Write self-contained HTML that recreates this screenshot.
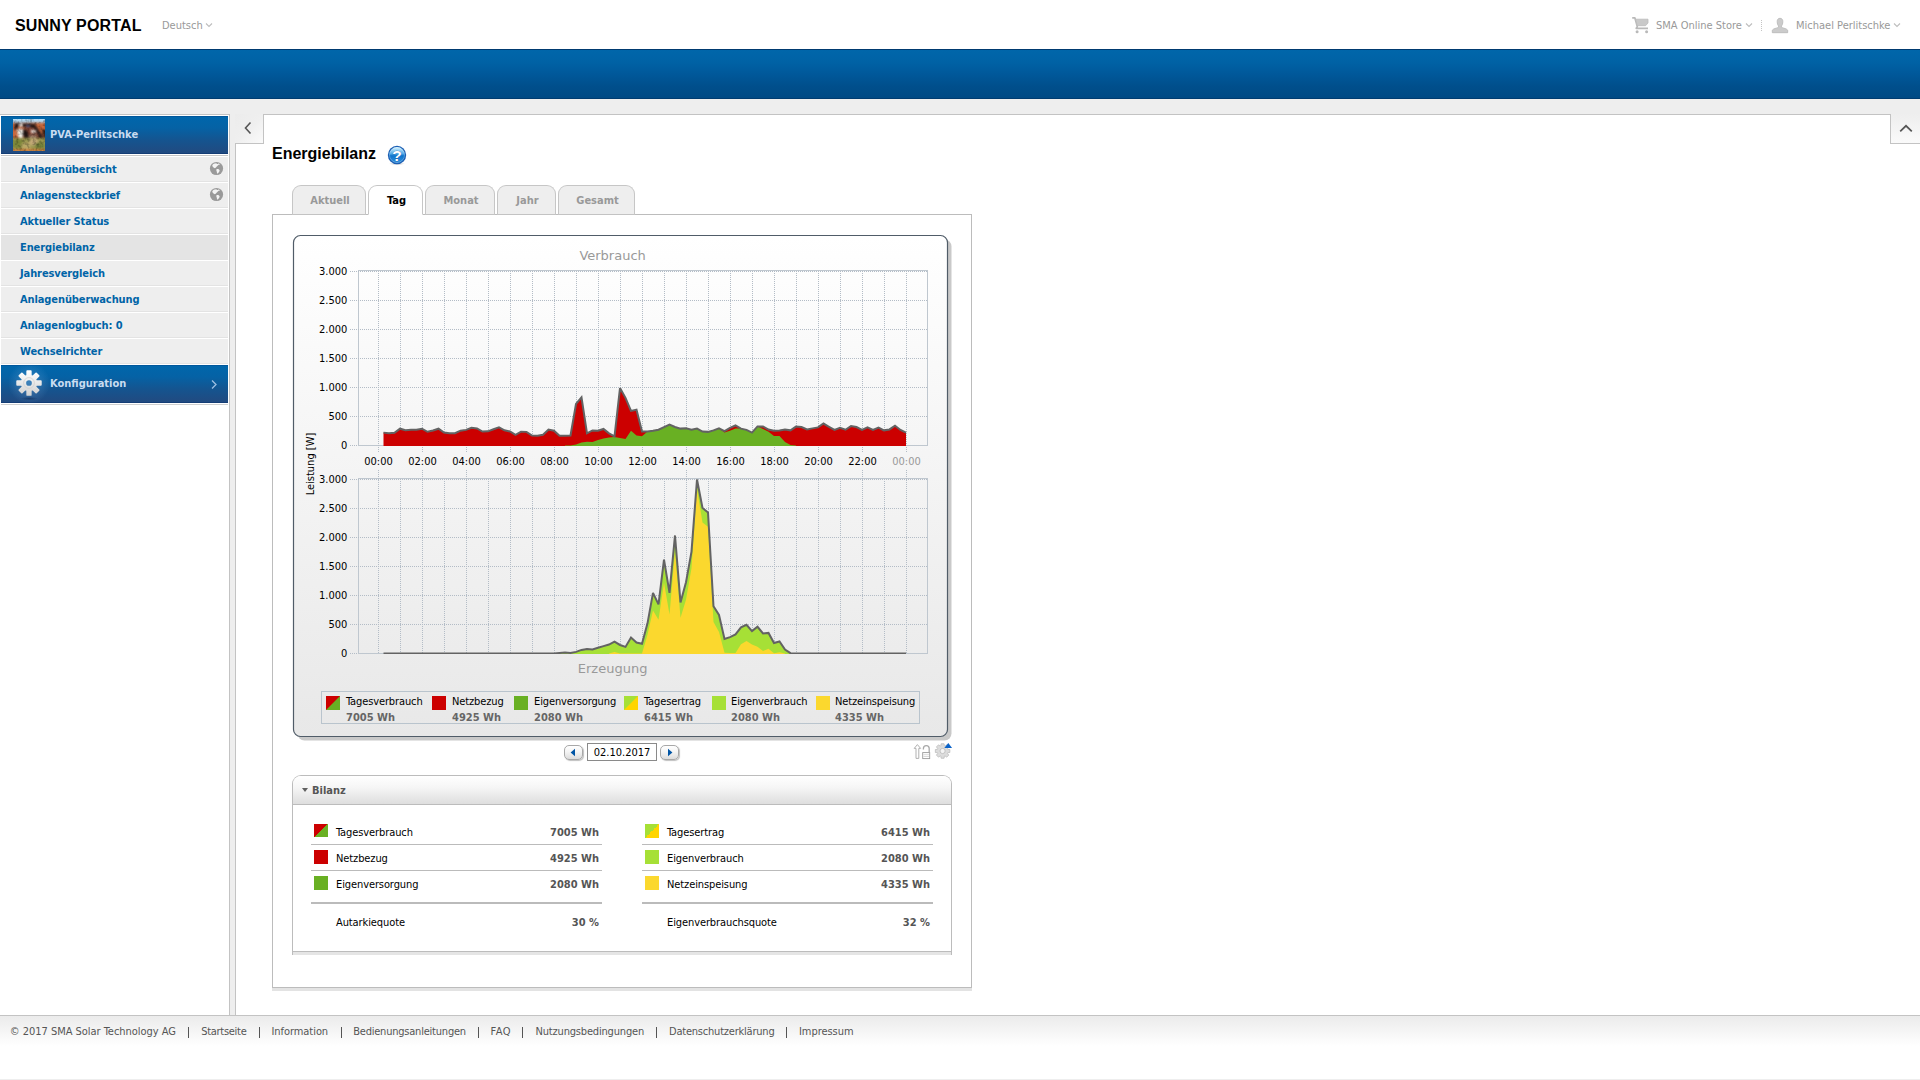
<!DOCTYPE html>
<html lang="de">
<head>
<meta charset="utf-8">
<title>Sunny Portal - Energiebilanz</title>
<style>
html,body{margin:0;padding:0}
body{width:1920px;height:1080px;overflow:hidden;position:relative;background:#eeeeee;
 font-family:"DejaVu Sans Condensed","DejaVu Sans","Liberation Sans",sans-serif;font-stretch:condensed;font-size:11px;color:#000}
.abs{position:absolute}
.fut{font-family:"Liberation Sans",sans-serif;font-stretch:normal;font-weight:bold}
#hdr{left:0;top:0;width:1920px;height:49px;background:#fff}
#logo{left:15px;top:17px;font-size:16px;line-height:18px;letter-spacing:.15px;color:#000;white-space:nowrap}
#lang{left:162px;top:19px;font-size:11px;line-height:14px;color:#999;white-space:nowrap}
.hl{font-size:11px;line-height:14px;color:#999;white-space:nowrap;top:19px}
#bar{left:0;top:49px;width:1920px;height:50px;box-sizing:border-box;border-top:1px solid #003a70;border-bottom:1px solid #003c70;
 background:linear-gradient(#0066aa 0%,#0062a5 25%,#00589a 50%,#004f8c 75%,#004a84 100%)}
/* sidebar */
#side{left:0;top:114px;width:229px;height:901px;background:#fff;border-top:1px solid #c3c3c3;border-right:1px solid #c3c3c3;box-sizing:content-box}
#plant{left:1px;top:1px;width:227px;height:38px;box-sizing:border-box;border-top:1px solid #00579c;border-bottom:1px solid #143d75;background:linear-gradient(#0066ab 0%,#0562a5 30%,#15548f 65%,#214a80 100%)}
#plant .nm{left:49px;top:11px;font-weight:bold;font-size:11px;line-height:14px;color:#c9dcf0;white-space:nowrap}
.mi{left:1px;width:227px;height:24px;background:#eeeeee;border-bottom:1px solid #e3e3e3}
.mi span{position:absolute;left:19px;top:6px;font-weight:bold;font-size:11px;line-height:14px;color:#0064a7;white-space:nowrap;letter-spacing:-0.1px}
.mi.sel{background:#e4e4e4}
.gl{left:208px;top:4px}
#conf{left:1px;top:250px;width:227px;height:38px;box-sizing:border-box;border-top:1px solid #00579c;border-bottom:1px solid #143d75;background:linear-gradient(#0066ab 0%,#0562a5 30%,#15548f 65%,#214a80 100%)}
#conf .nm{left:49px;top:11px;font-weight:bold;font-size:11px;line-height:14px;color:#c9dcf0;white-space:nowrap}
/* content */

#main{left:235px;top:114px;width:1684px;height:900px;background:#fff;border-left:1px solid #c3c3c3;border-top:1px solid #c3c3c3}
#colL{left:235px;top:114px;width:29px;height:30px;box-sizing:border-box;background:linear-gradient(135deg,#ececec 0%,#efefef 50%,#fafafa 100%);border-right:1px solid #c3c3c3;border-bottom:1px solid #c3c3c3}
#colR{left:1890px;top:114px;width:30px;height:30px;box-sizing:border-box;background:linear-gradient(#eeeeee,#fafafa);border-left:1px solid #c3c3c3;border-bottom:1px solid #c3c3c3}
#title{left:272px;top:144px;font-size:16px;line-height:20px;white-space:nowrap;color:#000}
#panel{left:272px;top:214px;width:700px;height:774px;box-sizing:border-box;border:1px solid #bcbcbc;background:#fff;box-shadow:0 3px 0 #e3e3e3}
.tab{top:185px;height:30px;box-sizing:border-box;border:1px solid #c6c6c6;border-bottom:1px solid #c3c3c3;border-radius:9px 9px 0 0;background:#eeeeee;color:#999;font-weight:bold;font-size:11px;line-height:14px;text-align:center;padding-top:8px;padding-left:2px}
.tab.act{background:#fff;color:#000;border-bottom:1px solid #fff}
.nbtn{width:19px;height:15px;box-sizing:border-box;border:1px solid #a8a8a8;border-radius:5px;background:linear-gradient(#ffffff,#f4f4f4 45%,#dcdcdc);box-shadow:1px 1px 1px rgba(0,0,0,.25)}
.nbtn svg{display:block}
#date{left:587px;top:743px;width:70px;height:18px;box-sizing:border-box;border:1px solid #8a8a8a;background:#fff;font-size:11px;line-height:18px;text-align:center;color:#000}
#bil{left:292px;top:775px;width:660px;height:180px;box-sizing:border-box;border:1px solid #bcbcbc;border-bottom:none;border-radius:9px 9px 0 0;background:#fff}
#bilh{left:0;top:0;width:658px;height:28px;border-bottom:1px solid #bcbcbc;border-radius:8px 8px 0 0;background:linear-gradient(#ffffff 0%,#f6f6f6 40%,#dedede 100%)}
#bilf{left:293px;top:951px;width:658px;height:4px;background:#e5e5e5;border-top:1px solid #bcbcbc;box-sizing:border-box}
.sw{width:14px;height:14px}
.bl{white-space:nowrap;line-height:14px;color:#000;letter-spacing:-0.1px}
.bv{width:288px;text-align:right;white-space:nowrap;line-height:14px;font-weight:bold;color:#555}
#foot{left:0;top:1015px;width:1920px;height:64px;box-sizing:border-box;border-top:1px solid #c3c3c3;background:linear-gradient(#ebebeb 0px,#ffffff 30px,#ffffff 100%)}
#ftxt{left:0;top:1025px;width:900px;height:16px;color:#555}
#ftxt span{position:absolute;top:0;white-space:nowrap;line-height:14px}
#ftxt i{position:absolute;top:2px;width:1px;height:11px;background:#555}
</style>
</head>
<body>
<div id="hdr" class="abs">
 <div id="logo" class="abs fut">SUNNY PORTAL</div>
 <div id="lang" class="abs">Deutsch</div>
 <div class="abs hl" style="left:1656px">SMA Online Store</div>
 <div class="abs hl" style="left:1796px">Michael Perlitschke</div>

 <svg class="abs" style="left:204px;top:21px" width="10" height="8" viewBox="0 0 10 8"><path d="M2 2.5 L5 5.5 L8 2.5" fill="none" stroke="#bdbdbd" stroke-width="1.1"/></svg>
 <svg class="abs" style="left:1631px;top:16px" width="19" height="18" viewBox="0 0 19 18">
  <path d="M1.2 1.9 H3.9 L6.3 10.6 L5.2 12.3 H17" fill="none" stroke="#b9b9b9" stroke-width="1.7" stroke-linejoin="round"/>
  <path d="M4.6 3.2 H17 V7 L14.6 9.7 H6.3 Z" fill="#c9c9c9" stroke="#bdbdbd" stroke-width="0.8" stroke-linejoin="round"/>
  <circle cx="6.1" cy="15.8" r="1.5" fill="#b9b9b9"/><circle cx="15.6" cy="15.8" r="1.5" fill="#b9b9b9"/>
 </svg>
 <svg class="abs" style="left:1744px;top:21px" width="10" height="8" viewBox="0 0 10 8"><path d="M2 2.5 L5 5.5 L8 2.5" fill="none" stroke="#bdbdbd" stroke-width="1.1"/></svg>
 <div class="abs" style="left:1761px;top:20px;width:1px;height:11px;background:repeating-linear-gradient(#c4c4c4 0,#c4c4c4 1px,transparent 1px,transparent 2px)"></div>
 <svg class="abs" style="left:1771px;top:17px" width="18" height="17" viewBox="0 0 18 17">
  <path d="M9 1.3 C11 1.3 11.8 2.7 11.8 4.5 C11.8 6.6 11.3 8 10.4 9 L10.4 10.2 C11.6 11.2 16.7 11.6 16.7 13.6 L16.7 15.7 L1.3 15.7 L1.3 13.6 C1.3 11.6 6.4 11.2 7.6 10.2 L7.6 9 C6.7 8 6.2 6.6 6.2 4.5 C6.2 2.7 7 1.3 9 1.3 Z" fill="#cbcbcb" stroke="#b6b6b6" stroke-width=".8"/>
 </svg>
 <svg class="abs" style="left:1892px;top:21px" width="10" height="8" viewBox="0 0 10 8"><path d="M2 2.5 L5 5.5 L8 2.5" fill="none" stroke="#bdbdbd" stroke-width="1.1"/></svg>
</div>
<div id="bar" class="abs"></div>

<div id="side" class="abs">
 <div id="plant" class="abs"><svg class="abs" style="left:12px;top:2px" width="32" height="32" viewBox="0 0 32 32">
 <defs><filter id="ph" x="0" y="0" width="100%" height="100%" color-interpolation-filters="sRGB">
  <feGaussianBlur in="SourceGraphic" stdDeviation="0.9" result="b"/>
  <feTurbulence type="fractalNoise" baseFrequency="0.3" numOctaves="2" seed="7" result="n"/>
  <feColorMatrix in="n" type="matrix" values="0.9 0 0 0 0.5  0.9 0 0 0 0.5  0.9 0 0 0 0.5  0 0 0 0 1" result="g"/>
  <feBlend in="b" in2="g" mode="multiply"/>
 </filter><clipPath id="tc"><rect width="32" height="32"/></clipPath></defs>
 <g clip-path="url(#tc)"><g filter="url(#ph)">
 <rect x="-3" y="-3" width="38" height="38" fill="#b8623e"/>
 <rect x="-3" y="-3" width="38" height="6.6" fill="#b4dcf6"/>
 <polygon points="19,4 35,4 35,22 30,20 24,9" fill="#c6683c"/>
 <polygon points="-3,5 3,5 4,11 5,21 -3,21" fill="#c8683e"/>
 <polygon points="2,4 22,5 31,19 27,20 21,9 12,8 5,7 3,11 1,11" fill="#2c1c1a"/>
 <polygon points="12,7 21,9 25,16 24,20 16,20 13,13" fill="#7e4030"/>
 <polygon points="10,10 14,11 16,19 12,21 10,16" fill="#231616"/>
 <polygon points="4,10 10,10 10,18 7,20 5,17" fill="#f2efe8"/>
 <polygon points="6,4.5 10,5 10,7.5 6,7.5" fill="#f0ece8"/>
 <polygon points="13,6 17,6 17,8 13,8" fill="#3a4a78"/>
 <polygon points="18,10.5 23,11.5 23,14 18,14" fill="#ece4dc"/>
 <polygon points="16,16 24,16 24,19 16,19" fill="#9a7a66"/>
 <polygon points="29,10 35,12 35,20 31,18" fill="#2a1a18"/>
 <rect x="-3" y="19" width="38" height="12" fill="#98964e"/>
 <ellipse cx="5" cy="25" rx="6" ry="5" fill="#7c8638"/>
 <ellipse cx="13" cy="27" rx="5" ry="4" fill="#b8a866"/>
 <ellipse cx="21" cy="23" rx="5" ry="3.6" fill="#c4aa78"/>
 <ellipse cx="27" cy="27" rx="5" ry="4" fill="#76823a"/>
 <rect x="-3" y="30" width="38" height="5" fill="#d08440"/>
 </g></g></svg><div class="abs nm">PVA-Perlitschke</div></div>
 <div class="abs mi" style="top:42px"><span>Anlagenübersicht</span><svg class="abs gl" width="15" height="15" viewBox="0 0 15 15"><circle cx="7.5" cy="7.5" r="6.6" fill="#9a9a9a"/><path d="M3.3 4.3 C3.8 2.9 5.6 2.1 7.6 2.2 C7.2 2.9 8.2 3.3 9 2.9 L9.9 3.5 C9.4 4.4 8.2 4.8 7.5 5.8 C6.9 6.8 6.1 7.4 5.4 7.1 C4.3 6.5 3.2 5.5 3.3 4.3 Z M9.3 2.3 L10.7 3 L10.4 3.9 L9.2 3.1 Z M7.4 8.4 C8.4 7.8 10 8.2 10.6 9.2 C10.8 10.4 9.6 11.4 8.8 12.4 C8.2 12.8 7.8 12 7.9 11 C7.8 10 7 9.2 7.4 8.4 Z" fill="#f4f4f4"/></svg></div>
 <div class="abs mi" style="top:68px"><span>Anlagensteckbrief</span><svg class="abs gl" width="15" height="15" viewBox="0 0 15 15"><circle cx="7.5" cy="7.5" r="6.6" fill="#9a9a9a"/><path d="M3.3 4.3 C3.8 2.9 5.6 2.1 7.6 2.2 C7.2 2.9 8.2 3.3 9 2.9 L9.9 3.5 C9.4 4.4 8.2 4.8 7.5 5.8 C6.9 6.8 6.1 7.4 5.4 7.1 C4.3 6.5 3.2 5.5 3.3 4.3 Z M9.3 2.3 L10.7 3 L10.4 3.9 L9.2 3.1 Z M7.4 8.4 C8.4 7.8 10 8.2 10.6 9.2 C10.8 10.4 9.6 11.4 8.8 12.4 C8.2 12.8 7.8 12 7.9 11 C7.8 10 7 9.2 7.4 8.4 Z" fill="#f4f4f4"/></svg></div>
 <div class="abs mi" style="top:94px"><span>Aktueller Status</span></div>
 <div class="abs mi sel" style="top:120px"><span>Energiebilanz</span></div>
 <div class="abs mi" style="top:146px"><span>Jahresvergleich</span></div>
 <div class="abs mi" style="top:172px"><span>Anlagenüberwachung</span></div>
 <div class="abs mi" style="top:198px"><span>Anlagenlogbuch: 0</span></div>
 <div class="abs mi" style="top:224px"><span>Wechselrichter</span></div>
 <div class="abs" style="left:1px;top:40px;width:227px;height:1px;background:#c6c6c6"></div>
 <div class="abs" style="left:1px;top:289px;width:227px;height:1px;background:#cfcfcf"></div>
 <div id="conf" class="abs"><svg class="abs" style="left:6px;top:-5px" width="44" height="48" viewBox="-8 -8 44 48">
 <defs><linearGradient id="gg" x1="0" y1="0" x2="0" y2="1"><stop offset="0" stop-color="#ffffff"/><stop offset="1" stop-color="#d2d2d2"/></linearGradient>
 <radialGradient id="gs"><stop offset="0" stop-color="#0b2a55" stop-opacity=".6"/><stop offset="1" stop-color="#0b2a55" stop-opacity="0"/></radialGradient>
 <radialGradient id="gl"><stop offset="0" stop-color="#8fc0ee" stop-opacity=".38"/><stop offset="1" stop-color="#8fc0ee" stop-opacity="0"/></radialGradient></defs>
 <circle cx="14" cy="14" r="21" fill="url(#gl)"/>
 <ellipse cx="14" cy="29.6" rx="9" ry="1.8" fill="url(#gs)"/>
 <path d="M12.17 6.83 L12.21 2.13 L15.79 2.13 L15.83 6.83 L17.78 7.64 L21.12 4.34 L23.66 6.88 L20.36 10.22 L21.17 12.17 L25.87 12.21 L25.87 15.79 L21.17 15.83 L20.36 17.78 L23.66 21.12 L21.12 23.66 L17.78 20.36 L15.83 21.17 L15.79 25.87 L12.21 25.87 L12.17 21.17 L10.22 20.36 L6.88 23.66 L4.34 21.12 L7.64 17.78 L6.83 15.83 L2.13 15.79 L2.13 12.21 L6.83 12.17 L7.64 10.22 L4.34 6.88 L6.88 4.34 L10.22 7.64 Z M14 10.3 A3.7 3.7 0 1 0 14 17.7 A3.7 3.7 0 1 0 14 10.3 Z" fill="url(#gg)" fill-rule="evenodd" stroke="url(#gg)" stroke-width="1.7" stroke-linejoin="round"/>
 <circle cx="14" cy="14" r="5.4" fill="none" stroke="#cfcfcf" stroke-width="1" opacity=".75"/>
</svg><svg class="abs" style="left:209px;top:13px" width="8" height="11" viewBox="0 0 8 11"><path d="M2 1.5 L6 5.5 L2 9.5" fill="none" stroke="#9ebfe2" stroke-width="1.3"/></svg><div class="abs nm">Konfiguration</div></div>
</div>

<div id="main" class="abs"></div>
<!-- collapse handles -->
<div class="abs" id="colL"></div>
<div class="abs" id="colR"></div>
<svg class="abs" style="left:240px;top:120px" width="16" height="16" viewBox="0 0 16 16"><path d="M10.5 2.5 L5.5 8 L10.5 13.5" fill="none" stroke="#555" stroke-width="1.6"/></svg>
<svg class="abs" style="left:1898px;top:120px" width="16" height="16" viewBox="0 0 16 16"><path d="M2.2 11.4 L8 5.8 L13.8 11.4" fill="none" stroke="#555" stroke-width="1.7"/></svg>

<div id="title" class="abs fut">Energiebilanz</div>
<svg class="abs" id="help" style="left:386px;top:144px" width="22" height="22" viewBox="0 0 22 22">
 <defs><linearGradient id="hg" x1="0" y1="0" x2="0" y2="1"><stop offset="0" stop-color="#d6f5ff"/><stop offset="0.42" stop-color="#4ea8e8"/><stop offset="0.55" stop-color="#0d74cc"/><stop offset="1" stop-color="#2f8edc"/></linearGradient>
 <radialGradient id="hs"><stop offset="0" stop-color="#000" stop-opacity=".25"/><stop offset="1" stop-color="#000" stop-opacity="0"/></radialGradient></defs>
 <ellipse cx="11" cy="19.6" rx="8" ry="1.8" fill="url(#hs)"/>
 <circle cx="11" cy="11" r="9.2" fill="#1c5fb4"/>
 <circle cx="11" cy="11" r="7.9" fill="url(#hg)"/>
 <circle cx="11" cy="11" r="7.5" fill="none" stroke="#fff" stroke-opacity=".3" stroke-width=".8"/>
 <text x="11" y="16.6" text-anchor="middle" font-family="Liberation Sans,sans-serif" font-weight="bold" font-size="15.5" fill="#fff" stroke="#2a5a98" stroke-width=".35" paint-order="stroke">?</text>
</svg>

<div id="panel" class="abs"></div>
<div class="abs tab" style="left:292px;width:74px">Aktuell</div>
<div class="abs tab act" style="left:368px;width:55px">Tag</div>
<div class="abs tab" style="left:425px;width:70px">Monat</div>
<div class="abs tab" style="left:497px;width:59px">Jahr</div>
<div class="abs tab" style="left:558px;width:77px">Gesamt</div>

<svg class="abs" id="chart" style="left:285px;top:228px" width="680" height="520" viewBox="285 228 680 520">
<defs>
 <linearGradient id="cbg" x1="0" y1="0" x2="0" y2="1"><stop offset="0" stop-color="#ffffff"/><stop offset="1" stop-color="#e8e8e8"/></linearGradient>
 <clipPath id="cu"><rect x="358" y="262" width="570" height="184"/></clipPath><clipPath id="cl"><rect x="358" y="470" width="570" height="184"/></clipPath>
</defs>
<style>
 .g{stroke:#b3bcc6;stroke-width:1;stroke-dasharray:1 1;shape-rendering:crispEdges}
 .ax{font-family:"DejaVu Sans Condensed","DejaVu Sans","Liberation Sans",sans-serif;font-stretch:condensed;font-size:11px;fill:#000}
 .gr{fill:#999}
 .tt{font-family:"DejaVu Sans","Liberation Sans",sans-serif;font-stretch:normal;font-size:13px;fill:#999}
 .lg{font-family:"DejaVu Sans Condensed","DejaVu Sans","Liberation Sans",sans-serif;font-stretch:condensed;font-size:11px;fill:#000;letter-spacing:-0.12px}
 .lv{font-family:"DejaVu Sans Condensed","DejaVu Sans","Liberation Sans",sans-serif;font-stretch:condensed;font-size:11px;font-weight:bold;fill:#666}
</style>
<rect x="297.5" y="239.5" width="654" height="501" rx="7" fill="#c9c9c9"/>
<rect x="293.5" y="235.5" width="654" height="501" rx="7" fill="url(#cbg)" stroke="#505c68" stroke-width="1.2"/>
<text x="612.6" y="259.5" text-anchor="middle" class="tt">Verbrauch</text>
<text x="612.6" y="673" text-anchor="middle" class="tt">Erzeugung</text>
<text transform="translate(313.6,464) rotate(-90)" text-anchor="middle" class="ax">Leistung [W]</text>
<rect x="358.5" y="270.5" width="569" height="175.0" fill="none" stroke="#bfc7cf" stroke-width="1"/>
<line x1="350" x2="927" y1="271.5" y2="271.5" class="g"/>
<line x1="350" x2="927" y1="300.5" y2="300.5" class="g"/>
<line x1="350" x2="927" y1="329.5" y2="329.5" class="g"/>
<line x1="350" x2="927" y1="358.5" y2="358.5" class="g"/>
<line x1="350" x2="927" y1="387.5" y2="387.5" class="g"/>
<line x1="350" x2="927" y1="416.5" y2="416.5" class="g"/>
<line x1="350" x2="358" y1="445.5" y2="445.5" class="g"/>
<line x1="378.5" x2="378.5" y1="271.0" y2="453.0" class="g"/>
<line x1="400.5" x2="400.5" y1="271.0" y2="445.0" class="g"/>
<line x1="422.5" x2="422.5" y1="271.0" y2="453.0" class="g"/>
<line x1="444.5" x2="444.5" y1="271.0" y2="445.0" class="g"/>
<line x1="466.5" x2="466.5" y1="271.0" y2="453.0" class="g"/>
<line x1="488.5" x2="488.5" y1="271.0" y2="445.0" class="g"/>
<line x1="510.5" x2="510.5" y1="271.0" y2="453.0" class="g"/>
<line x1="532.5" x2="532.5" y1="271.0" y2="445.0" class="g"/>
<line x1="554.5" x2="554.5" y1="271.0" y2="453.0" class="g"/>
<line x1="576.5" x2="576.5" y1="271.0" y2="445.0" class="g"/>
<line x1="598.5" x2="598.5" y1="271.0" y2="453.0" class="g"/>
<line x1="620.5" x2="620.5" y1="271.0" y2="445.0" class="g"/>
<line x1="642.5" x2="642.5" y1="271.0" y2="453.0" class="g"/>
<line x1="664.5" x2="664.5" y1="271.0" y2="445.0" class="g"/>
<line x1="686.5" x2="686.5" y1="271.0" y2="453.0" class="g"/>
<line x1="708.5" x2="708.5" y1="271.0" y2="445.0" class="g"/>
<line x1="730.5" x2="730.5" y1="271.0" y2="453.0" class="g"/>
<line x1="752.5" x2="752.5" y1="271.0" y2="445.0" class="g"/>
<line x1="774.5" x2="774.5" y1="271.0" y2="453.0" class="g"/>
<line x1="796.5" x2="796.5" y1="271.0" y2="445.0" class="g"/>
<line x1="818.5" x2="818.5" y1="271.0" y2="453.0" class="g"/>
<line x1="840.5" x2="840.5" y1="271.0" y2="445.0" class="g"/>
<line x1="862.5" x2="862.5" y1="271.0" y2="453.0" class="g"/>
<line x1="884.5" x2="884.5" y1="271.0" y2="445.0" class="g"/>
<line x1="906.5" x2="906.5" y1="271.0" y2="453.0" class="g"/>
<g clip-path="url(#cu)">
<polygon points="383.50,446.00 383.50,432.62 389.00,433.32 394.50,432.74 400.00,428.68 405.50,430.30 411.00,429.72 416.50,429.72 422.00,428.68 427.50,431.75 433.00,430.48 438.50,428.68 444.00,432.45 449.50,433.20 455.00,433.20 460.50,430.65 466.00,429.90 471.50,427.75 477.00,428.45 482.50,431.58 488.00,431.35 493.50,429.20 499.00,427.40 504.50,430.30 510.00,431.46 515.50,434.77 521.00,431.64 526.50,431.87 532.00,435.52 537.50,435.70 543.00,434.77 548.50,429.49 554.00,430.77 559.50,435.70 565.00,435.70 570.50,435.52 576.00,403.97 581.50,397.42 587.00,433.32 592.50,430.42 598.00,430.65 603.50,428.97 609.00,433.32 614.50,436.45 620.00,388.02 625.50,397.82 631.00,410.87 636.50,409.77 642.00,431.41 647.50,431.52 653.00,430.77 658.50,429.72 664.00,427.17 669.50,424.62 675.00,426.94 680.50,428.62 686.00,428.27 691.50,429.72 697.00,428.62 702.50,431.52 708.00,431.87 713.50,430.42 719.00,428.27 724.50,431.17 730.00,427.87 735.50,425.49 741.00,428.62 746.50,429.84 752.00,432.62 757.50,426.42 763.00,426.42 768.50,429.55 774.00,430.71 779.50,430.48 785.00,429.55 790.50,430.36 796.00,426.59 801.50,427.06 807.00,429.43 812.50,428.39 818.00,427.40 823.50,423.52 829.00,426.82 834.50,429.96 840.00,427.87 845.50,429.72 851.00,426.07 856.50,427.06 862.00,429.96 867.50,427.40 873.00,429.96 878.50,427.64 884.00,430.36 889.50,429.43 895.00,425.66 900.50,429.96 906.00,432.68 906.00,446.00" fill="#cc0000"/>
<polygon points="565.00,446.00 565.00,445.50 570.50,445.38 576.00,444.57 581.50,442.54 587.00,441.79 592.50,442.02 598.00,440.05 603.50,438.60 609.00,437.44 614.50,436.97 620.00,438.02 625.50,439.12 631.00,430.77 636.50,435.52 642.00,436.22 647.50,431.52 653.00,430.77 658.50,429.72 664.00,427.17 669.50,424.62 675.00,426.94 680.50,428.62 686.00,428.27 691.50,429.72 697.00,428.62 702.50,431.52 708.00,431.87 713.50,430.42 719.00,428.27 724.50,432.39 730.00,430.77 735.50,428.62 741.00,428.62 746.50,429.84 752.00,432.62 757.50,426.42 763.00,428.97 768.50,431.87 774.00,435.93 779.50,435.93 785.00,442.02 790.50,445.09 796.00,445.50 796.00,446.00" fill="#69b023"/>
<polyline points="383.50,432.62 389.00,433.32 394.50,432.74 400.00,428.68 405.50,430.30 411.00,429.72 416.50,429.72 422.00,428.68 427.50,431.75 433.00,430.48 438.50,428.68 444.00,432.45 449.50,433.20 455.00,433.20 460.50,430.65 466.00,429.90 471.50,427.75 477.00,428.45 482.50,431.58 488.00,431.35 493.50,429.20 499.00,427.40 504.50,430.30 510.00,431.46 515.50,434.77 521.00,431.64 526.50,431.87 532.00,435.52 537.50,435.70 543.00,434.77 548.50,429.49 554.00,430.77 559.50,435.70 565.00,435.70 570.50,435.52 576.00,403.97 581.50,397.42 587.00,433.32 592.50,430.42 598.00,430.65 603.50,428.97 609.00,433.32 614.50,436.45 620.00,388.02 625.50,397.82 631.00,410.87 636.50,409.77 642.00,431.41 647.50,431.52 653.00,430.77 658.50,429.72 664.00,427.17 669.50,424.62 675.00,426.94 680.50,428.62 686.00,428.27 691.50,429.72 697.00,428.62 702.50,431.52 708.00,431.87 713.50,430.42 719.00,428.27 724.50,431.17 730.00,427.87 735.50,425.49 741.00,428.62 746.50,429.84 752.00,432.62 757.50,426.42 763.00,426.42 768.50,429.55 774.00,430.71 779.50,430.48 785.00,429.55 790.50,430.36 796.00,426.59 801.50,427.06 807.00,429.43 812.50,428.39 818.00,427.40 823.50,423.52 829.00,426.82 834.50,429.96 840.00,427.87 845.50,429.72 851.00,426.07 856.50,427.06 862.00,429.96 867.50,427.40 873.00,429.96 878.50,427.64 884.00,430.36 889.50,429.43 895.00,425.66 900.50,429.96 906.00,432.68" fill="none" stroke="#636363" stroke-width="2" stroke-linejoin="miter" stroke-miterlimit="3"/>
</g>
<rect x="358.5" y="478.5" width="569" height="175.0" fill="none" stroke="#bfc7cf" stroke-width="1"/>
<line x1="350" x2="927" y1="479.5" y2="479.5" class="g"/>
<line x1="350" x2="927" y1="508.5" y2="508.5" class="g"/>
<line x1="350" x2="927" y1="537.5" y2="537.5" class="g"/>
<line x1="350" x2="927" y1="566.5" y2="566.5" class="g"/>
<line x1="350" x2="927" y1="595.5" y2="595.5" class="g"/>
<line x1="350" x2="927" y1="624.5" y2="624.5" class="g"/>
<line x1="350" x2="358" y1="653.5" y2="653.5" class="g"/>
<line x1="378.5" x2="378.5" y1="470.0" y2="653.0" class="g"/>
<line x1="400.5" x2="400.5" y1="479.0" y2="653.0" class="g"/>
<line x1="422.5" x2="422.5" y1="470.0" y2="653.0" class="g"/>
<line x1="444.5" x2="444.5" y1="479.0" y2="653.0" class="g"/>
<line x1="466.5" x2="466.5" y1="470.0" y2="653.0" class="g"/>
<line x1="488.5" x2="488.5" y1="479.0" y2="653.0" class="g"/>
<line x1="510.5" x2="510.5" y1="470.0" y2="653.0" class="g"/>
<line x1="532.5" x2="532.5" y1="479.0" y2="653.0" class="g"/>
<line x1="554.5" x2="554.5" y1="470.0" y2="653.0" class="g"/>
<line x1="576.5" x2="576.5" y1="479.0" y2="653.0" class="g"/>
<line x1="598.5" x2="598.5" y1="470.0" y2="653.0" class="g"/>
<line x1="620.5" x2="620.5" y1="479.0" y2="653.0" class="g"/>
<line x1="642.5" x2="642.5" y1="470.0" y2="653.0" class="g"/>
<line x1="664.5" x2="664.5" y1="479.0" y2="653.0" class="g"/>
<line x1="686.5" x2="686.5" y1="470.0" y2="653.0" class="g"/>
<line x1="708.5" x2="708.5" y1="479.0" y2="653.0" class="g"/>
<line x1="730.5" x2="730.5" y1="470.0" y2="653.0" class="g"/>
<line x1="752.5" x2="752.5" y1="479.0" y2="653.0" class="g"/>
<line x1="774.5" x2="774.5" y1="470.0" y2="653.0" class="g"/>
<line x1="796.5" x2="796.5" y1="479.0" y2="653.0" class="g"/>
<line x1="818.5" x2="818.5" y1="470.0" y2="653.0" class="g"/>
<line x1="840.5" x2="840.5" y1="479.0" y2="653.0" class="g"/>
<line x1="862.5" x2="862.5" y1="470.0" y2="653.0" class="g"/>
<line x1="884.5" x2="884.5" y1="479.0" y2="653.0" class="g"/>
<line x1="906.5" x2="906.5" y1="470.0" y2="653.0" class="g"/>
<g clip-path="url(#cl)">
<polygon points="554.00,654.00 554.00,653.50 559.50,652.98 565.00,652.57 570.50,652.98 576.00,651.88 581.50,649.90 587.00,648.98 592.50,649.50 598.00,647.70 603.50,646.13 609.00,644.57 614.50,641.73 620.00,644.97 625.50,646.89 631.00,637.61 636.50,642.48 642.00,643.70 647.50,623.34 653.00,592.83 658.50,604.37 664.00,559.54 669.50,592.83 675.00,535.47 680.50,602.52 686.00,582.22 691.50,551.59 697.00,479.50 702.50,508.04 708.00,512.44 713.50,606.23 719.00,614.99 724.50,639.00 730.00,637.09 735.50,634.36 741.00,627.28 746.50,624.79 752.00,631.05 757.50,626.76 763.00,633.43 768.50,632.91 774.00,643.06 779.50,641.49 785.00,649.61 790.50,653.21 796.00,653.50 796.00,654.00" fill="#a6e036"/>
<polygon points="609.00,654.00 609.00,653.50 614.50,651.88 620.00,653.50 625.50,653.50 631.00,653.50 636.50,653.50 642.00,653.50 647.50,634.82 653.00,610.41 658.50,619.63 664.00,582.68 669.50,614.52 675.00,551.59 680.50,617.77 686.00,599.73 691.50,568.36 697.00,488.90 702.50,522.54 708.00,526.71 713.50,621.95 719.00,632.10 724.50,652.63 730.00,652.92 735.50,652.92 741.00,644.34 746.50,641.09 752.00,644.51 757.50,646.66 763.00,651.06 768.50,648.86 774.00,653.21 779.50,652.22 785.00,653.50 785.00,654.00" fill="#fbd82e"/>
<polyline points="383.50,653.50 389.00,653.50 394.50,653.50 400.00,653.50 405.50,653.50 411.00,653.50 416.50,653.50 422.00,653.50 427.50,653.50 433.00,653.50 438.50,653.50 444.00,653.50 449.50,653.50 455.00,653.50 460.50,653.50 466.00,653.50 471.50,653.50 477.00,653.50 482.50,653.50 488.00,653.50 493.50,653.50 499.00,653.50 504.50,653.50 510.00,653.50 515.50,653.50 521.00,653.50 526.50,653.50 532.00,653.50 537.50,653.50 543.00,653.50 548.50,653.50 554.00,653.50 559.50,652.98 565.00,652.57 570.50,652.98 576.00,651.88 581.50,649.90 587.00,648.98 592.50,649.50 598.00,647.70 603.50,646.13 609.00,644.57 614.50,641.73 620.00,644.97 625.50,646.89 631.00,637.61 636.50,642.48 642.00,643.70 647.50,623.34 653.00,592.83 658.50,604.37 664.00,559.54 669.50,592.83 675.00,535.47 680.50,602.52 686.00,582.22 691.50,551.59 697.00,479.50 702.50,508.04 708.00,512.44 713.50,606.23 719.00,614.99 724.50,639.00 730.00,637.09 735.50,634.36 741.00,627.28 746.50,624.79 752.00,631.05 757.50,626.76 763.00,633.43 768.50,632.91 774.00,643.06 779.50,641.49 785.00,649.61 790.50,653.21 796.00,653.50 801.50,653.50 807.00,653.50 812.50,653.50 818.00,653.50 823.50,653.50 829.00,653.50 834.50,653.50 840.00,653.50 845.50,653.50 851.00,653.50 856.50,653.50 862.00,653.50 867.50,653.50 873.00,653.50 878.50,653.50 884.00,653.50 889.50,653.50 895.00,653.50 900.50,653.50 906.00,653.50" fill="none" stroke="#636363" stroke-width="2" stroke-linejoin="miter" stroke-miterlimit="3"/>
</g>
<text x="347.3" y="275.3" text-anchor="end" class="ax">3.000</text>
<text x="347.3" y="304.3" text-anchor="end" class="ax">2.500</text>
<text x="347.3" y="333.3" text-anchor="end" class="ax">2.000</text>
<text x="347.3" y="362.3" text-anchor="end" class="ax">1.500</text>
<text x="347.3" y="391.3" text-anchor="end" class="ax">1.000</text>
<text x="347.3" y="420.3" text-anchor="end" class="ax">500</text>
<text x="347.3" y="449.3" text-anchor="end" class="ax">0</text>
<text x="347.3" y="483.3" text-anchor="end" class="ax">3.000</text>
<text x="347.3" y="512.3" text-anchor="end" class="ax">2.500</text>
<text x="347.3" y="541.3" text-anchor="end" class="ax">2.000</text>
<text x="347.3" y="570.3" text-anchor="end" class="ax">1.500</text>
<text x="347.3" y="599.3" text-anchor="end" class="ax">1.000</text>
<text x="347.3" y="628.3" text-anchor="end" class="ax">500</text>
<text x="347.3" y="657.3" text-anchor="end" class="ax">0</text>
<text x="378.5" y="465" text-anchor="middle" class="ax">00:00</text>
<text x="422.5" y="465" text-anchor="middle" class="ax">02:00</text>
<text x="466.5" y="465" text-anchor="middle" class="ax">04:00</text>
<text x="510.5" y="465" text-anchor="middle" class="ax">06:00</text>
<text x="554.5" y="465" text-anchor="middle" class="ax">08:00</text>
<text x="598.5" y="465" text-anchor="middle" class="ax">10:00</text>
<text x="642.5" y="465" text-anchor="middle" class="ax">12:00</text>
<text x="686.5" y="465" text-anchor="middle" class="ax">14:00</text>
<text x="730.5" y="465" text-anchor="middle" class="ax">16:00</text>
<text x="774.5" y="465" text-anchor="middle" class="ax">18:00</text>
<text x="818.5" y="465" text-anchor="middle" class="ax">20:00</text>
<text x="862.5" y="465" text-anchor="middle" class="ax">22:00</text>
<text x="906.5" y="465" text-anchor="middle" class="ax gr">00:00</text>
<!-- legend -->
<rect x="321.5" y="691.5" width="598" height="32" fill="none" stroke="#b9c4cd"/>
<g>
 <rect x="326" y="696" width="14" height="14" fill="#cc0000"/><polygon points="340,696 340,710 326,710" fill="#69b023"/>
 <text x="346" y="705" class="lg">Tagesverbrauch</text><text x="346" y="721" class="lv">7005 Wh</text>
 <rect x="432" y="696" width="14" height="14" fill="#cc0000"/>
 <text x="452" y="705" class="lg">Netzbezug</text><text x="452" y="721" class="lv">4925 Wh</text>
 <rect x="514" y="696" width="14" height="14" fill="#69b023"/>
 <text x="534" y="705" class="lg">Eigenversorgung</text><text x="534" y="721" class="lv">2080 Wh</text>
 <rect x="624" y="696" width="14" height="14" fill="#a6e036"/><polygon points="638,696 638,710 624,710" fill="#ffd500"/>
 <text x="644" y="705" class="lg">Tagesertrag</text><text x="644" y="721" class="lv">6415 Wh</text>
 <rect x="712" y="696" width="14" height="14" fill="#a6e036"/>
 <text x="731" y="705" class="lg">Eigenverbrauch</text><text x="731" y="721" class="lv">2080 Wh</text>
 <rect x="816" y="696" width="14" height="14" fill="#fbd82e"/>
 <text x="835" y="705" class="lg">Netzeinspeisung</text><text x="835" y="721" class="lv">4335 Wh</text>
</g>
</svg>

<!-- date navigation -->
<div class="abs nbtn" style="left:564px;top:745px"><svg width="17" height="13" viewBox="0 0 17 13"><polygon points="10,2.8 10,10.2 5.6,6.5" fill="#0055a5"/></svg></div>
<div class="abs" id="date">02.10.2017</div>
<div class="abs nbtn" style="left:660px;top:745px"><svg width="17" height="13" viewBox="0 0 17 13"><polygon points="7,2.8 7,10.2 11.4,6.5" fill="#0055a5"/></svg></div>

<svg class="abs" style="left:908px;top:738px" width="50" height="26" viewBox="908 738 50 26">
 <path d="M917.4 744.6 L920.6 748.4 L918.8 748.4 L918.8 758.4 L916 758.4 L916 748.4 L914.2 748.4 Z" fill="#fff" stroke="#a8a8a8" stroke-width="0.9" stroke-linejoin="round"/>
 <path d="M923.4 749.6 L923.4 748.6 A2.9 3 0 0 1 929.2 748.6 L929.2 752.4" fill="none" stroke="#a8a8a8" stroke-width="1.3"/>
 <rect x="922.7" y="752.6" width="7" height="6" fill="#fff" stroke="#9a9a9a" stroke-width="0.9"/>
 <path d="M923.4 754.7 H929 M923.4 756.5 H929" stroke="#cfcfcf" stroke-width="0.8"/>
 <path d="M940.85 745.89 L941.13 743.75 L944.07 743.75 L944.35 745.89 L944.98 746.15 L946.69 744.83 L948.77 746.91 L947.45 748.62 L947.71 749.25 L949.85 749.53 L949.85 752.47 L947.71 752.75 L947.45 753.38 L948.77 755.09 L946.69 757.17 L944.98 755.85 L944.35 756.11 L944.07 758.25 L941.13 758.25 L940.85 756.11 L940.22 755.85 L938.51 757.17 L936.43 755.09 L937.75 753.38 L937.49 752.75 L935.35 752.47 L935.35 749.53 L937.49 749.25 L937.75 748.62 L936.43 746.91 L938.51 744.83 L940.22 746.15 Z" fill="#dcdcdc" stroke="#bdbdbd" stroke-width="0.8" stroke-linejoin="round"/>
 <circle cx="942.6" cy="751" r="2.6" fill="#f4f4f4" stroke="#bdbdbd" stroke-width="0.9"/>
 <polygon points="948.3,742.9 952.1,747.9 944.3,747.9" fill="#0a62c8"/>
</svg>
<!-- Bilanz -->
<div class="abs" id="bil">
 <div class="abs" id="bilh"><span class="abs" style="left:9px;top:12px;width:0;height:0;border-left:3.5px solid transparent;border-right:3.5px solid transparent;border-top:4.5px solid #606060"></span><span class="abs" style="left:19px;top:8px;font-weight:bold;color:#555;line-height:14px">Bilanz</span></div>
</div>
<div class="abs" id="bilf"></div>
<div class="abs sw" style="left:314px;top:824px;height:13px;background:linear-gradient(135deg,#cc0000 50%,#69b023 50%)"></div>
<div class="abs bl" style="left:336px;top:826px">Tagesverbrauch</div><div class="abs bv" style="left:311px;top:826px">7005 Wh</div>
<div class="abs" style="left:311px;top:844px;width:291px;height:1px;background:#bbb"></div>
<div class="abs sw" style="left:314px;top:850px;background:#cc0000"></div>
<div class="abs bl" style="left:336px;top:852px">Netzbezug</div><div class="abs bv" style="left:311px;top:852px">4925 Wh</div>
<div class="abs" style="left:311px;top:870px;width:291px;height:1px;background:#bbb"></div>
<div class="abs sw" style="left:314px;top:876px;background:#69b023"></div>
<div class="abs bl" style="left:336px;top:878px">Eigenversorgung</div><div class="abs bv" style="left:311px;top:878px">2080 Wh</div>
<div class="abs" style="left:311px;top:902px;width:291px;height:2px;background:#bbb"></div>
<div class="abs bl" style="left:336px;top:916px">Autarkiequote</div><div class="abs bv" style="left:311px;top:916px">30 %</div>
<div class="abs sw" style="left:645px;top:824px;height:14px;background:linear-gradient(135deg,#a6e036 50%,#ffd500 50%)"></div>
<div class="abs bl" style="left:667px;top:826px">Tagesertrag</div><div class="abs bv" style="left:642px;top:826px">6415 Wh</div>
<div class="abs" style="left:642px;top:844px;width:291px;height:1px;background:#bbb"></div>
<div class="abs sw" style="left:645px;top:850px;background:#a6e036"></div>
<div class="abs bl" style="left:667px;top:852px">Eigenverbrauch</div><div class="abs bv" style="left:642px;top:852px">2080 Wh</div>
<div class="abs" style="left:642px;top:870px;width:291px;height:1px;background:#bbb"></div>
<div class="abs sw" style="left:645px;top:876px;background:#fbd82e"></div>
<div class="abs bl" style="left:667px;top:878px">Netzeinspeisung</div><div class="abs bv" style="left:642px;top:878px">4335 Wh</div>
<div class="abs" style="left:642px;top:902px;width:291px;height:2px;background:#bbb"></div>
<div class="abs bl" style="left:667px;top:916px">Eigenverbrauchsquote</div><div class="abs bv" style="left:642px;top:916px">32 %</div>

<!-- footer -->
<div class="abs" id="foot"></div>
<div class="abs" id="ftxt"><span style="left:9.8px;letter-spacing:-0.033px">© 2017 SMA Solar Technology AG</span><span style="left:201.2px;letter-spacing:-0.284px">Startseite</span><span style="left:271.5px;letter-spacing:-0.061px">Information</span><span style="left:353.2px;letter-spacing:-0.218px">Bedienungsanleitungen</span><span style="left:490.5px;letter-spacing:0.484px">FAQ</span><span style="left:535.5px;letter-spacing:-0.179px">Nutzungsbedingungen</span><span style="left:669.0px;letter-spacing:-0.212px">Datenschutzerklärung</span><span style="left:799.0px;letter-spacing:-0.054px">Impressum</span><i style="left:188px"></i><i style="left:259px"></i><i style="left:341px"></i><i style="left:478px"></i><i style="left:522px"></i><i style="left:656px"></i><i style="left:786px"></i></div>
</body>
</html>
